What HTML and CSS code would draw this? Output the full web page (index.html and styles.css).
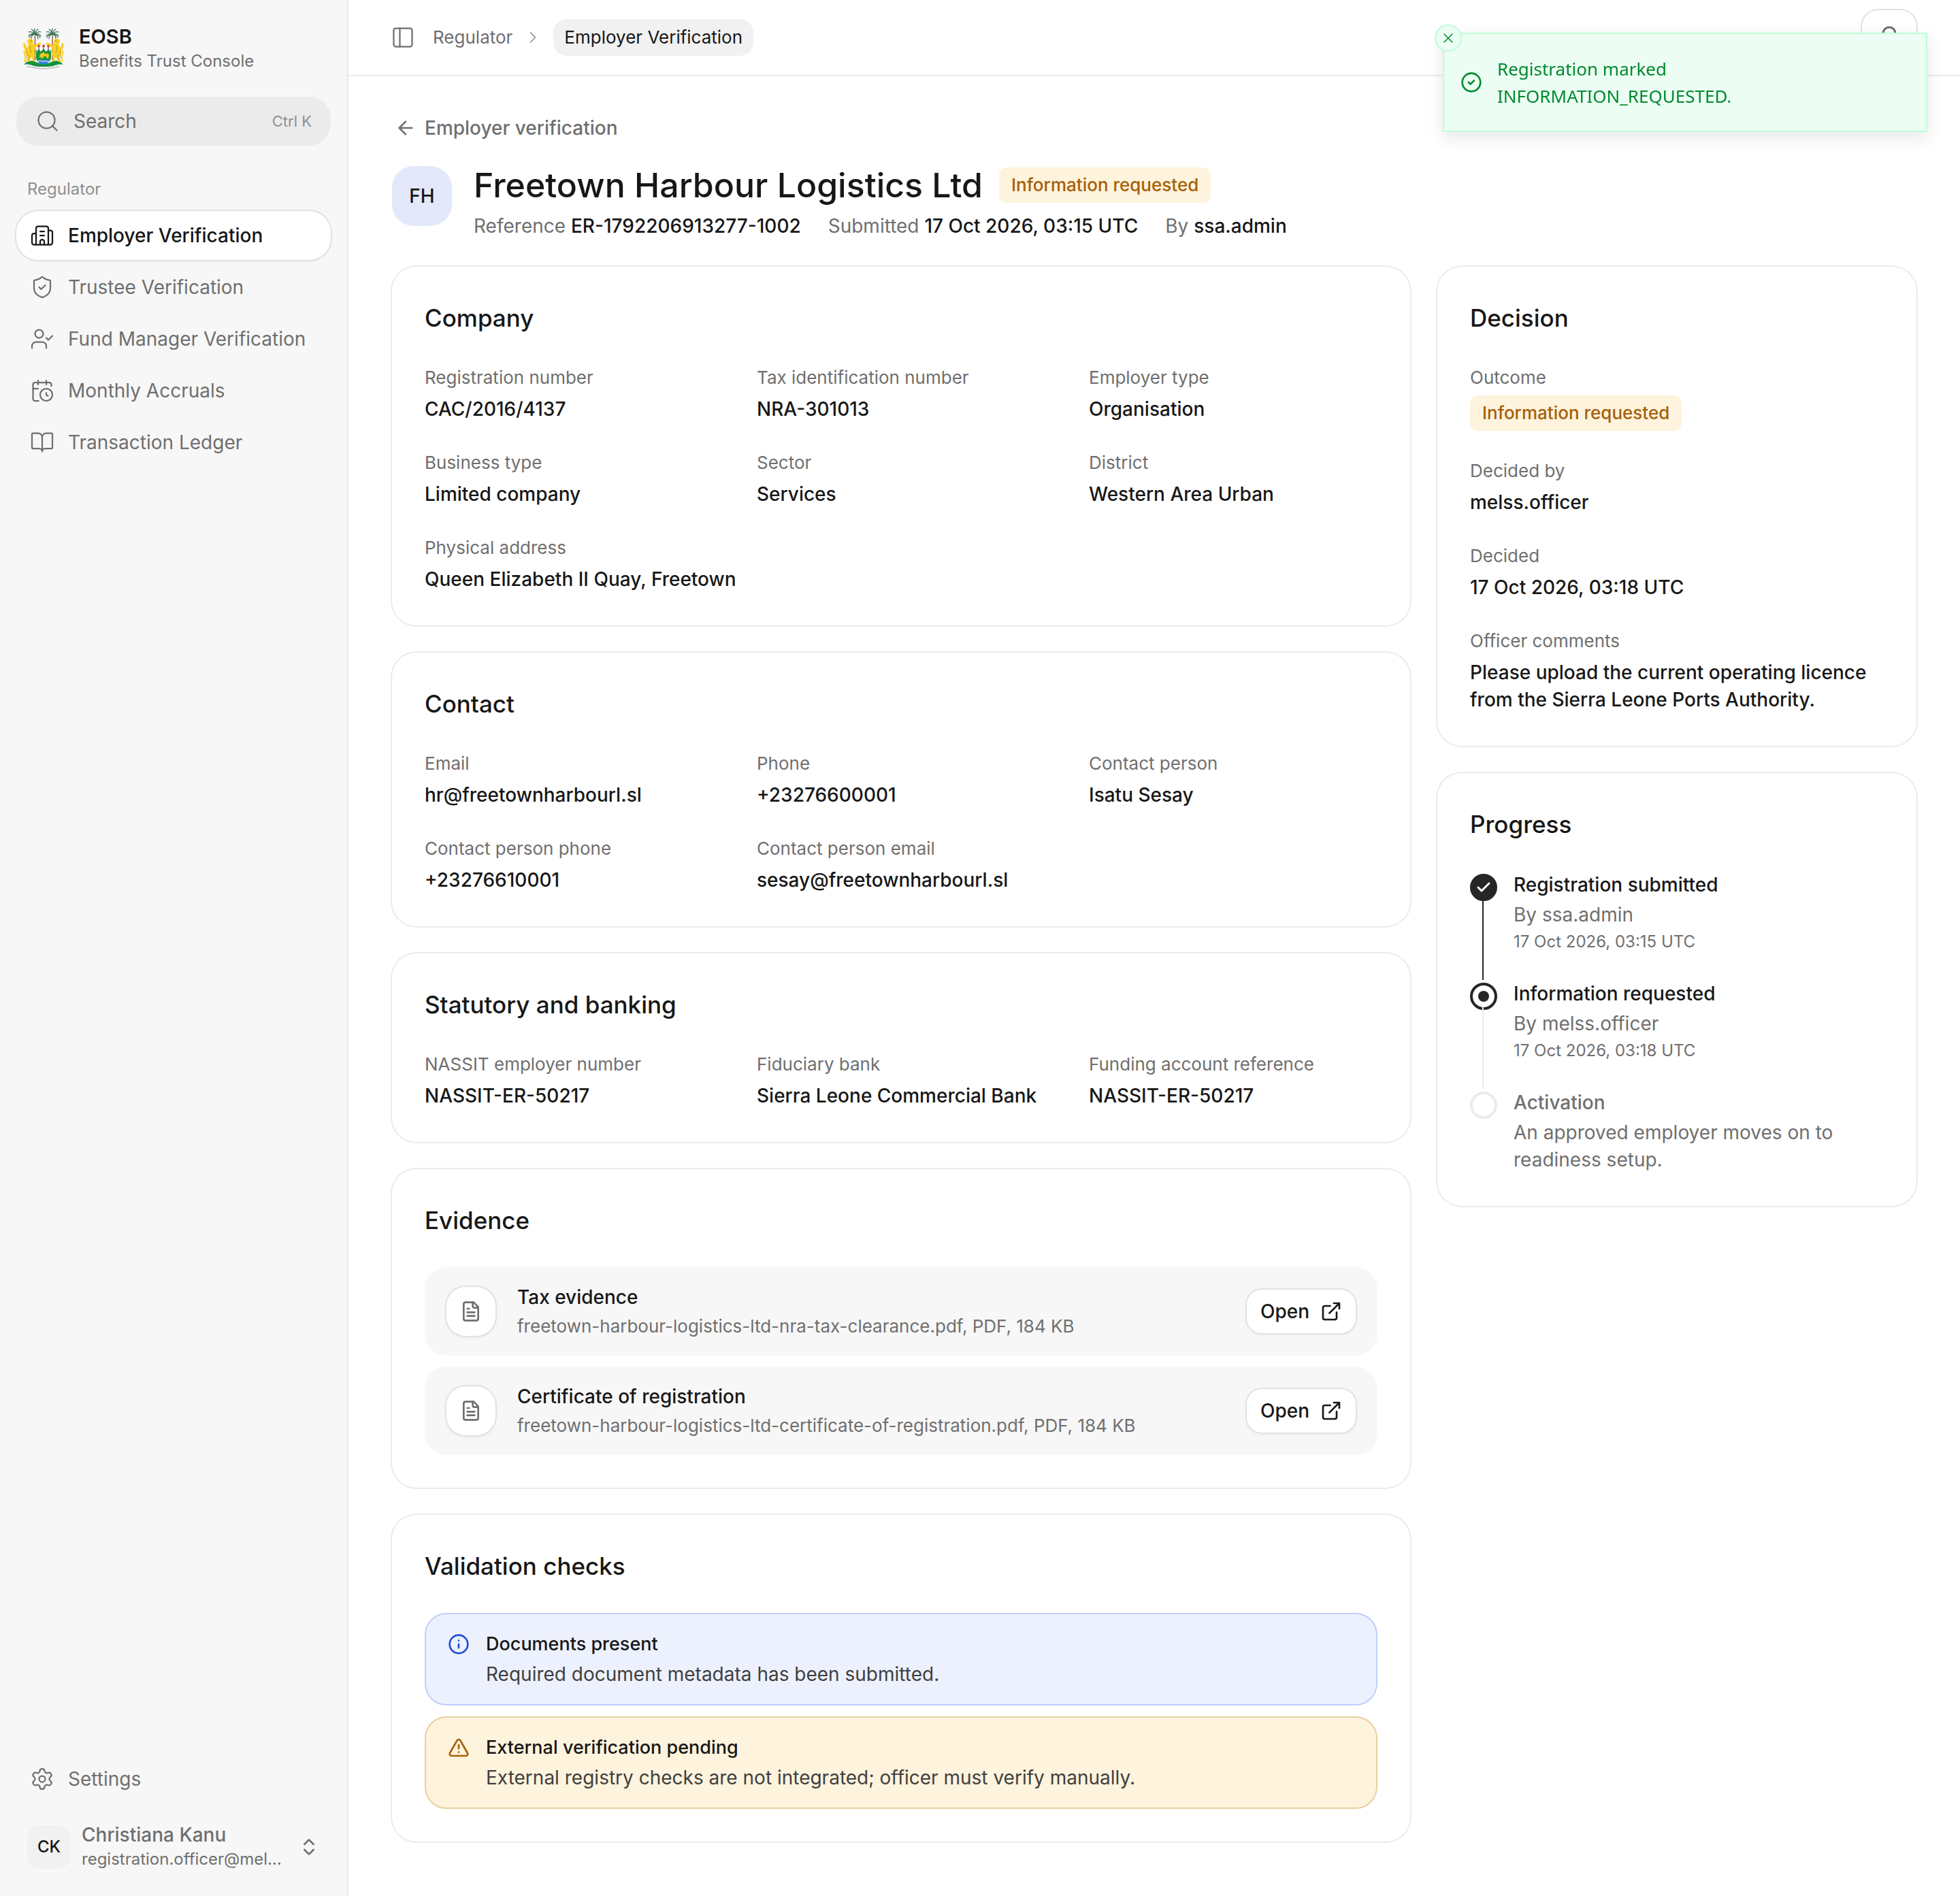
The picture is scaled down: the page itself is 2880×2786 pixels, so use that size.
FILE: index.html
```html
<!DOCTYPE html>
<html lang="en">
<head>
  <meta charset="UTF-8" />
  <meta name="viewport" content="width=device-width, initial-scale=1" />
  <title>Freetown Harbour Logistics Ltd | Employer Verification</title>
  <link rel="stylesheet" href="styles.css">
</head>
<body>
  <div class="app">

    <!-- Sidebar -->
    <aside class="sidebar">
      <div class="brand">
        <svg class="crest" viewBox="0 0 64 60" aria-hidden="true">
          <path d="M19.5 9v38M45 9v38" stroke="#8a4a32" stroke-width="1.3" fill="none"/>
          <g id="palm" stroke="#2d6b4f" stroke-width="1.2" stroke-linecap="round" fill="none">
            <path d="M19 8c-1-3-1-5 0-8M19 8c1-4 3-6 5-7M19 8c-1-4-3-6-5-7M19 8c3-3 6-4 9-3M19 8c-3-3-6-4-9-3M19 8c4-1 7 0 9 3M19 8c-4-1-7 0-9 3M19 8c3 1 5 3 5 7M19 8c-3 1-5 3-5 7M19 8c4 0 6 2 8 5M19 8c-4 0-6 2-8 5"/>
          </g>
          <use href="#palm" x="26"/>
          <path d="M3 53c4-5 9-7 15-5 5 2 9 4 14 4s9-2 14-4c6-2 11 0 15 5-5-1-9 0-12 1-5 2-11 2-17 2s-12 0-17-2c-3-1-7-2-12-1z" fill="#16923f"/>
          <path d="M21 31h22v11c0 6-5 9-11 11-6-2-11-5-11-11z" fill="#189440"/>
          <path d="M22 34l3-4 3 4 4-5 4 5 3-4 3 4v-6H22z" fill="#fff"/>
          <path d="M23 46c3-2 6 2 9 0s6 2 9 0l-2 4c-2 2-4 3-7 3s-6-1-7-3z" fill="#2f7fd6"/>
          <path d="M24 48c3-2 5 1 8 0s5 1 8 0" stroke="#fff" stroke-width="1" fill="none"/>
          <path d="M26 43c0-4 1-7 4-7l2-2 2 3c3 0 6-1 6 2l-1 5h-2l-1-3h-4l-1 3h-2l-1-3-1 2z" fill="#f0c419"/>
          <path d="M24 22c2-1 4 0 5 1M40 22c-2-1-4 0-5 1" stroke="#f0c419" stroke-width="1.5" fill="none"/>
          <g stroke="#454545" stroke-width="1.2"><path d="M25 27v5M32 27v5M39 27v5"/></g>
          <g fill="#d9492c"><circle cx="25" cy="25.500" r="2"/><circle cx="32" cy="25.500" r="2"/><circle cx="39" cy="25.500" r="2"/></g>
          <g id="lion">
            <path d="M8 19c0-3 3-5 6-4 2 1 3 3 3 5l-1 2 3 2c3-1 6-4 9-3l-1 2c-2 0-4 3-7 5l-1 6c1 4 1 7-1 9l2 5h-4l-1-6-2 1-3 6H6l3-8c-3-2-4-6-3-10-3-1-4-4-3-7L0 23l4-1 1-2 1 4c0 2 0 3 2 4l2-5z" fill="#f8cf27"/>
            <path d="M4 32c-1 3 0 6 1 8s0 6-1 9" stroke="#f8cf27" stroke-width="2" fill="none"/>
            <path d="M6 31c2 5 2 9 1 12M12 25c1 4 0 8 2 11M10 38c2 3 1 5 0 8" stroke="#b98412" stroke-width="0.800" fill="none"/>
            <circle cx="14" cy="18" r="0.700" fill="#6b3f10"/>
          </g>
          <use href="#lion" transform="translate(64 0) scale(-1 1)"/>
          <path d="M8 56c6 0 9 3 14 3M22 58c7 1 13 1 20 0M42 59c5 0 8-3 14-3" stroke="#fff" stroke-width="4" fill="none"/>
          <path d="M8 56c6 0 9 2 14 2M23 58c7 1 12 1 18 0M42 58c5 0 8-2 14-2" stroke="#77777a" stroke-width="2" stroke-dasharray="1 1.300" fill="none"/>
        </svg>
        <div>
          <div class="brand-name">EOSB</div>
          <div class="brand-sub">Benefits Trust Console</div>
        </div>
      </div>

      <button class="search" type="button">
        <svg class="icon" viewBox="0 0 24 24"><circle cx="11" cy="11" r="8"/><path d="m21 21-4.300-4.300"/></svg>
        <span class="search-text">Search</span>
        <span class="search-key">Ctrl K</span>
      </button>

      <div class="nav-label">Regulator</div>
      <nav class="nav">
        <a class="nav-item active" href="#">
          <svg class="icon" viewBox="0 0 24 24"><path d="M10 12h4M10 8h4M14 21v-3a2 2 0 0 0-4 0v3M6 10H4a2 2 0 0 0-2 2v7a2 2 0 0 0 2 2h16a2 2 0 0 0 2-2V9a2 2 0 0 0-2-2h-2M6 21V5a2 2 0 0 1 2-2h8a2 2 0 0 1 2 2v16"/></svg>
          Employer Verification
        </a>
        <a class="nav-item" href="#">
          <svg class="icon" viewBox="0 0 24 24"><path d="M20 13c0 5-3.500 7.500-7.660 8.950a1 1 0 0 1-.67-.01C7.500 20.500 4 18 4 13V6a1 1 0 0 1 1-1c2 0 4.500-1.200 6.240-2.720a1.170 1.170 0 0 1 1.520 0C14.510 3.810 17 5 19 5a1 1 0 0 1 1 1z"/><path d="m9 12 2 2 4-4"/></svg>
          Trustee Verification
        </a>
        <a class="nav-item" href="#">
          <svg class="icon" viewBox="0 0 24 24"><path d="m16 11 2 2 4-4M16 21v-2a4 4 0 0 0-4-4H6a4 4 0 0 0-4 4v2"/><circle cx="9" cy="7" r="4"/></svg>
          Fund Manager Verification
        </a>
        <a class="nav-item" href="#">
          <svg class="icon" viewBox="0 0 24 24"><path d="M16 14v2.200l1.600 1M16 2v4M21 7.500V6a2 2 0 0 0-2-2H5a2 2 0 0 0-2 2v14a2 2 0 0 0 2 2h3.500M3 10h5M8 2v4"/><circle cx="16" cy="16" r="6"/></svg>
          Monthly Accruals
        </a>
        <a class="nav-item" href="#">
          <svg class="icon" viewBox="0 0 24 24"><path d="M12 7v14M3 18a1 1 0 0 1-1-1V4a1 1 0 0 1 1-1h5a4 4 0 0 1 4 4 4 4 0 0 1 4-4h5a1 1 0 0 1 1 1v13a1 1 0 0 1-1 1h-6a3 3 0 0 0-3 3 3 3 0 0 0-3-3z"/></svg>
          Transaction Ledger
        </a>
      </nav>

      <div class="sidebar-bottom">
        <a class="nav-item" href="#">
          <svg class="icon" viewBox="0 0 24 24"><path d="M9.671 4.136a2.340 2.340 0 0 1 4.659 0 2.340 2.340 0 0 0 3.319 1.915 2.340 2.340 0 0 1 2.330 4.033 2.340 2.340 0 0 0 0 3.831 2.340 2.340 0 0 1-2.330 4.033 2.340 2.340 0 0 0-3.319 1.915 2.340 2.340 0 0 1-4.659 0 2.340 2.340 0 0 0-3.320-1.915 2.340 2.340 0 0 1-2.330-4.033 2.340 2.340 0 0 0 0-3.831A2.340 2.340 0 0 1 6.350 6.051a2.340 2.340 0 0 0 3.319-1.915"/><circle cx="12" cy="12" r="3"/></svg>
          Settings
        </a>
        <button class="user" type="button">
          <span class="user-avatar">CK</span>
          <span class="user-info">
            <span class="user-name">Christiana Kanu</span>
            <span class="user-email">registration.officer@mel…</span>
          </span>
          <svg class="icon icon-sm" viewBox="0 0 24 24"><path d="m7 15 5 5 5-5M7 9l5-5 5 5"/></svg>
        </button>
      </div>
    </aside>

    <!-- Page -->
    <div class="page">
      <header class="topbar">
        <button class="toggle" type="button" aria-label="Toggle sidebar">
          <svg class="icon" viewBox="0 0 24 24"><rect x="3" y="3" width="18" height="18" rx="2"/><path d="M9 3v18"/></svg>
        </button>
        <nav class="crumbs" aria-label="Breadcrumb">
          <a href="#">Regulator</a>
          <svg class="icon crumb-sep" viewBox="0 0 24 24"><path d="m9 18 6-6-6-6"/></svg>
          <span class="crumb-current">Employer Verification</span>
        </nav>
        <button class="bell" type="button" aria-label="Notifications">
          <svg class="icon" viewBox="0 0 24 24"><path d="M10.268 21a2 2 0 0 0 3.464 0M3.262 15.326A1 1 0 0 0 4 17h16a1 1 0 0 0 .74-1.673C19.410 13.956 18 12.499 18 8A6 6 0 0 0 6 8c0 4.499-1.411 5.956-2.738 7.326"/></svg>
        </button>
      </header>

      <main class="content">
        <a class="back" href="#">
          <svg class="icon icon-sm" viewBox="0 0 24 24"><path d="m12 19-7-7 7-7M19 12H5"/></svg>
          Employer verification
        </a>

        <div class="heading">
          <div class="heading-avatar">FH</div>
          <div>
            <div class="heading-row">
              <h1>Freetown Harbour Logistics Ltd</h1>
              <span class="badge">Information requested</span>
            </div>
            <div class="meta">
              <span>Reference <strong>ER-1792206913277-1002</strong></span>
              <span>Submitted <strong>17 Oct 2026, 03:15 UTC</strong></span>
              <span>By <strong>ssa.admin</strong></span>
            </div>
          </div>
        </div>

        <div class="columns">
          <div class="stack">
            <section class="card">
              <h2>Company</h2>
              <dl class="fields">
                <div><dt>Registration number</dt><dd>CAC/2016/4137</dd></div>
                <div><dt>Tax identification number</dt><dd>NRA-301013</dd></div>
                <div><dt>Employer type</dt><dd>Organisation</dd></div>
                <div><dt>Business type</dt><dd>Limited company</dd></div>
                <div><dt>Sector</dt><dd>Services</dd></div>
                <div><dt>District</dt><dd>Western Area Urban</dd></div>
                <div><dt>Physical address</dt><dd>Queen Elizabeth II Quay, Freetown</dd></div>
              </dl>
            </section>

            <section class="card">
              <h2>Contact</h2>
              <dl class="fields">
                <div><dt>Email</dt><dd>hr@freetownharbourl.sl</dd></div>
                <div><dt>Phone</dt><dd>+23276600001</dd></div>
                <div><dt>Contact person</dt><dd>Isatu Sesay</dd></div>
                <div><dt>Contact person phone</dt><dd>+23276610001</dd></div>
                <div><dt>Contact person email</dt><dd>sesay@freetownharbourl.sl</dd></div>
              </dl>
            </section>

            <section class="card">
              <h2>Statutory and banking</h2>
              <dl class="fields">
                <div><dt>NASSIT employer number</dt><dd>NASSIT-ER-50217</dd></div>
                <div><dt>Fiduciary bank</dt><dd>Sierra Leone Commercial Bank</dd></div>
                <div><dt>Funding account reference</dt><dd>NASSIT-ER-50217</dd></div>
              </dl>
            </section>

            <section class="card">
              <h2>Evidence</h2>
              <ul class="list">
                <li class="file">
                  <span class="file-icon">
                    <svg class="icon icon-sm" viewBox="0 0 24 24"><path d="M15 2H6a2 2 0 0 0-2 2v16a2 2 0 0 0 2 2h12a2 2 0 0 0 2-2V7z"/><path d="M14 2v4a2 2 0 0 0 2 2h4M10 9H8M16 13H8M16 17H8"/></svg>
                  </span>
                  <div class="file-text">
                    <div class="item-title">Tax evidence</div>
                    <div class="file-meta">freetown-harbour-logistics-ltd-nra-tax-clearance.pdf, PDF, 184 KB</div>
                  </div>
                  <button class="open" type="button">Open
                    <svg class="icon icon-sm" viewBox="0 0 24 24"><path d="M15 3h6v6M10 14 21 3M18 13v6a2 2 0 0 1-2 2H5a2 2 0 0 1-2-2V8a2 2 0 0 1 2-2h6"/></svg>
                  </button>
                </li>
                <li class="file">
                  <span class="file-icon">
                    <svg class="icon icon-sm" viewBox="0 0 24 24"><path d="M15 2H6a2 2 0 0 0-2 2v16a2 2 0 0 0 2 2h12a2 2 0 0 0 2-2V7z"/><path d="M14 2v4a2 2 0 0 0 2 2h4M10 9H8M16 13H8M16 17H8"/></svg>
                  </span>
                  <div class="file-text">
                    <div class="item-title">Certificate of registration</div>
                    <div class="file-meta">freetown-harbour-logistics-ltd-certificate-of-registration.pdf, PDF, 184 KB</div>
                  </div>
                  <button class="open" type="button">Open
                    <svg class="icon icon-sm" viewBox="0 0 24 24"><path d="M15 3h6v6M10 14 21 3M18 13v6a2 2 0 0 1-2 2H5a2 2 0 0 1-2-2V8a2 2 0 0 1 2-2h6"/></svg>
                  </button>
                </li>
              </ul>
            </section>

            <section class="card">
              <h2>Validation checks</h2>
              <ul class="list">
                <li class="alert alert-info">
                  <svg class="icon icon-sm" viewBox="0 0 24 24"><circle cx="12" cy="12" r="10"/><path d="M12 16v-4M12 8h.01"/></svg>
                  <div>
                    <div class="alert-title">Documents present</div>
                    <div class="alert-text">Required document metadata has been submitted.</div>
                  </div>
                </li>
                <li class="alert alert-warn">
                  <svg class="icon icon-sm" viewBox="0 0 24 24"><path d="m21.730 18-8-14a2 2 0 0 0-3.480 0l-8 14A2 2 0 0 0 4 21h16a2 2 0 0 0 1.730-3M12 9v4M12 17h.01"/></svg>
                  <div>
                    <div class="alert-title">External verification pending</div>
                    <div class="alert-text">External registry checks are not integrated; officer must verify manually.</div>
                  </div>
                </li>
              </ul>
            </section>
          </div>

          <div class="stack">
            <section class="card">
              <h2>Decision</h2>
              <dl class="fields fields-single">
                <div><dt>Outcome</dt><dd><span class="badge">Information requested</span></dd></div>
                <div><dt>Decided by</dt><dd>melss.officer</dd></div>
                <div><dt>Decided</dt><dd>17 Oct 2026, 03:18 UTC</dd></div>
                <div><dt>Officer comments</dt><dd>Please upload the current operating licence from the Sierra Leone Ports Authority.</dd></div>
              </dl>
            </section>

            <section class="card">
              <h2>Progress</h2>
              <ol class="steps">
                <li class="step done">
                  <span class="step-dot">
                    <svg viewBox="0 0 24 24"><path d="M20 6 9 17l-5-5"/></svg>
                  </span>
                  <div>
                    <div class="item-title">Registration submitted</div>
                    <div class="step-text">By ssa.admin</div>
                    <div class="step-time">17 Oct 2026, 03:15 UTC</div>
                  </div>
                </li>
                <li class="step current">
                  <span class="step-dot"></span>
                  <div>
                    <div class="item-title">Information requested</div>
                    <div class="step-text">By melss.officer</div>
                    <div class="step-time">17 Oct 2026, 03:18 UTC</div>
                  </div>
                </li>
                <li class="step">
                  <span class="step-dot"></span>
                  <div>
                    <div class="item-title">Activation</div>
                    <div class="step-text">An approved employer moves on to readiness setup.</div>
                  </div>
                </li>
              </ol>
            </section>
          </div>
        </div>
      </main>
    </div>
  </div>

  <!-- Toast -->
  <div class="toast" role="status">
    <button class="toast-close" type="button" aria-label="Close">
      <svg class="icon" viewBox="0 0 24 24"><path d="M18 6 6 18M6 6l12 12"/></svg>
    </button>
    <svg class="icon icon-sm" viewBox="0 0 24 24"><circle cx="12" cy="12" r="10"/><path d="m9 12 2 2 4-4"/></svg>
    <div class="toast-text">Registration marked INFORMATION_REQUESTED.</div>
  </div>
</body>
</html>
```

FILE: styles.css
```css
* {
  box-sizing: border-box;
}

body {
  margin: 0;
  font-family: Inter, "Liberation Sans", sans-serif;
  font-size: 28px;
  line-height: 40px;
  color: #171717;
  background: #fff;
}

h1, h2, dl, dd, ul, ol {
  margin: 0;
  padding: 0;
}

ul, ol {
  list-style: none;
}

a {
  color: inherit;
  text-decoration: none;
}

button {
  font: inherit;
  color: inherit;
  background: none;
  border: none;
  padding: 0;
  cursor: pointer;
}

.icon {
  width: 36px;
  height: 36px;
  flex-shrink: 0;
  fill: none;
  stroke: currentColor;
  stroke-width: 1.5;
  stroke-linecap: round;
  stroke-linejoin: round;
}

.icon-sm {
  width: 32px;
  height: 32px;
  stroke-width: 2;
}

.app {
  display: flex;
  min-height: 100vh;
}

/* Sidebar */
.sidebar {
  width: 512px;
  flex-shrink: 0;
  display: flex;
  flex-direction: column;
  padding: 36px 24px 24px;
  background: #f7f7f7;
  border-right: 2px solid #ebebeb;
}

.brand {
  display: flex;
  align-items: center;
  gap: 20px;
  padding-left: 8px;
  margin-bottom: 34px;
}

.crest {
  width: 64px;
  height: 60px;
}

.brand-name {
  font-size: 29px;
  font-weight: 600;
  line-height: 36px;
}

.brand-sub {
  font-size: 24px;
  line-height: 36px;
  color: #6f6f6f;
}

.search {
  display: flex;
  align-items: center;
  gap: 20px;
  height: 72px;
  padding: 0 28px;
  border-radius: 32px;
  background: #ebebeb;
  color: #6f6f6f;
  text-align: left;
}

.search-text {
  flex: 1;
}

.search-key {
  font-size: 22px;
  color: #8f8f8f;
}

.nav-label {
  margin: 46px 0 14px 16px;
  font-size: 24px;
  line-height: 36px;
  color: #8f8f8f;
}

.nav {
  display: flex;
  flex-direction: column;
  gap: 4px;
}

.nav-item {
  display: flex;
  align-items: center;
  gap: 20px;
  height: 72px;
  padding: 0 20px;
  border-radius: 32px;
  color: #6f6f6f;
}

.nav-item.active {
  background: #fff;
  color: #171717;
  font-weight: 500;
  box-shadow: 0 0 0 2px #e2e2e2, 0 2px 4px rgba(0, 0, 0, 0.06);
}

.sidebar-bottom {
  margin-top: auto;
  display: flex;
  flex-direction: column;
  gap: 16px;
}

.user {
  display: flex;
  align-items: center;
  gap: 16px;
  height: 96px;
  padding: 0 16px;
  color: #6f6f6f;
  text-align: left;
}

.user-avatar {
  width: 64px;
  height: 64px;
  flex-shrink: 0;
  border-radius: 20px;
  background: #f1f1f1;
  color: #171717;
  font-size: 24px;
  font-weight: 500;
  line-height: 64px;
  text-align: center;
}

.user-info {
  flex: 1;
}

.user-name,
.user-email {
  display: block;
  line-height: 36px;
}

.user-name {
  font-weight: 500;
}

.user-email {
  font-size: 24px;
}

/* Top bar */
.page {
  flex: 1;
  min-width: 0;
}

.topbar {
  display: flex;
  align-items: center;
  height: 112px;
  padding: 0 64px 0 62px;
  border-bottom: 2px solid #ebebeb;
  color: #6f6f6f;
}

.toggle {
  display: flex;
  margin-right: 26px;
}

.crumbs {
  display: flex;
  align-items: center;
  gap: 16px;
  font-size: 26px;
}

.crumb-sep {
  width: 28px;
  height: 28px;
  color: #8f8f8f;
}

.crumb-current {
  padding: 7px 16px;
  border-radius: 20px;
  background: #f1f1f1;
  color: #171717;
}

.bell {
  display: flex;
  align-items: center;
  justify-content: center;
  width: 80px;
  height: 80px;
  margin-left: auto;
  border-radius: 24px;
  box-shadow: 0 0 0 2px #e2e2e2;
}

.bell .icon {
  stroke-width: 2;
}

/* Content */
.content {
  padding: 56px 64px 80px;
}

.back {
  display: inline-flex;
  align-items: center;
  gap: 12px;
  height: 40px;
  margin-bottom: 36px;
  padding-left: 4px;
  color: #6f6f6f;
  font-weight: 500;
  vertical-align: top;
}

.heading {
  display: flex;
  align-items: flex-start;
  gap: 32px;
  margin-bottom: 40px;
}

.heading-avatar {
  width: 88px;
  height: 88px;
  border-radius: 32px;
  background: #e3e8fa;
  font-weight: 500;
  line-height: 88px;
  text-align: center;
}

.heading-row {
  display: flex;
  align-items: center;
  gap: 24px;
  margin-bottom: 12px;
}

h1 {
  font-size: 50px;
  font-weight: 500;
  line-height: 56px;
}

.badge {
  display: block;
  width: fit-content;
  padding: 6px 18px;
  border-radius: 12px;
  background: #fef3dc;
  color: #a65f0a;
  font-size: 26px;
  font-weight: 500;
}

.meta {
  display: flex;
  gap: 40px;
  color: #6f6f6f;
}

.meta strong {
  color: #171717;
  font-weight: 500;
}

.columns {
  display: grid;
  grid-template-columns: minmax(0, 1fr) 704px;
  align-items: start;
  gap: 40px;
}

.stack {
  display: flex;
  flex-direction: column;
  gap: 40px;
}

.card {
  padding: 48px;
  border-radius: 36px;
  background: #fff;
  box-shadow: 0 0 0 2px #ebebeb;
}

h2 {
  margin-bottom: 42px;
  font-size: 35px;
  font-weight: 500;
  line-height: 54px;
}

.fields {
  display: grid;
  grid-template-columns: repeat(3, minmax(0, 1fr));
  gap: 40px 64px;
}

.fields-single {
  grid-template-columns: 1fr;
}

dt {
  margin-bottom: 7px;
  font-size: 26px;
  line-height: 38px;
  color: #6f6f6f;
}

dd {
  font-weight: 500;
  white-space: nowrap;
}

.fields-single dd {
  white-space: normal;
}

.list {
  display: flex;
  flex-direction: column;
  gap: 16px;
}

.item-title {
  font-weight: 500;
}

/* Evidence files */
.file {
  display: flex;
  align-items: center;
  gap: 32px;
  padding: 24px 32px;
  border-radius: 32px;
  background: #f7f7f7;
}

.file-icon {
  display: flex;
  align-items: center;
  justify-content: center;
  width: 72px;
  height: 72px;
  border-radius: 28px;
  background: #fff;
  color: #6f6f6f;
  box-shadow: 0 0 0 2px #e2e2e2, 0 2px 6px rgba(0, 0, 0, 0.06);
}

.file-text {
  flex: 1;
  min-width: 0;
}

.file-meta {
  margin-top: 4px;
  font-size: 26px;
  line-height: 38px;
  color: #6f6f6f;
}

.open {
  display: flex;
  align-items: center;
  gap: 16px;
  height: 64px;
  padding: 0 20px;
  border-radius: 22px;
  background: #fff;
  font-weight: 500;
  box-shadow: 0 0 0 2px #e2e2e2, 0 2px 6px rgba(0, 0, 0, 0.06);
}

/* Validation alerts */
.alert {
  display: flex;
  gap: 24px;
  padding: 24px 32px;
  border: 2px solid;
  border-radius: 32px;
}

.alert .icon {
  margin-top: 4px;
}

.alert-info {
  background: #edf1fe;
  border-color: #bfcff8;
  color: #1d4ed8;
}

.alert-warn {
  background: #fef3dc;
  border-color: #e8cfa0;
  color: #a65f0a;
}

.alert-title {
  color: #171717;
  font-size: 27px;
  font-weight: 500;
}

.alert-text {
  margin-top: 4px;
  color: #404040;
}

/* Progress steps */
.step {
  position: relative;
  display: flex;
  gap: 24px;
  padding-bottom: 40px;
  color: #6f6f6f;
}

.step:last-child {
  padding-bottom: 0;
}

.step.done .item-title,
.step.current .item-title {
  color: #171717;
}

.step-dot {
  display: flex;
  align-items: center;
  justify-content: center;
  width: 40px;
  height: 40px;
  margin-top: 4px;
  flex-shrink: 0;
  border: 4px solid #ebebeb;
  border-radius: 50%;
  background: #fff;
}

.step.done .step-dot {
  border-color: #262626;
  background: #262626;
}

.step.current .step-dot {
  border-color: #262626;
}

.step.current .step-dot::before {
  content: "";
  width: 16px;
  height: 16px;
  border-radius: 50%;
  background: #262626;
}

.step-dot svg {
  width: 24px;
  height: 24px;
  flex-shrink: 0;
  fill: none;
  stroke: #fff;
  stroke-width: 3;
  stroke-linecap: round;
  stroke-linejoin: round;
}

/* line between two dots */
.step:not(:last-child)::after {
  content: "";
  position: absolute;
  top: 40px;
  bottom: 0;
  left: 18px;
  width: 2px;
  background: #ebebeb;
}

.step.done::after {
  background: #262626 !important;
}

.step-text {
  margin-top: 4px;
}

.step-time {
  margin-top: 4px;
  font-size: 24px;
  line-height: 32px;
}

/* Toast */
.toast {
  position: fixed;
  top: 48px;
  right: 48px;
  width: 712px;
  display: flex;
  align-items: center;
  gap: 22px;
  padding: 31px 24px;
  border: 2px solid #bffcd9;
  background: #ecfdf3;
  color: #008a2e;
  box-shadow: 0 8px 24px rgba(0, 0, 0, 0.1);
}

.toast-text {
  max-width: 400px;
  font-family: "Noto Sans", sans-serif;
  font-size: 26px;
}

.toast-close {
  position: absolute;
  top: -14px;
  left: -14px;
  display: flex;
  align-items: center;
  justify-content: center;
  width: 40px;
  height: 40px;
  border: 2px solid #bffcd9;
  border-radius: 50%;
  background: #ecfdf3;
}

.toast-close .icon {
  width: 24px;
  height: 24px;
}
```
